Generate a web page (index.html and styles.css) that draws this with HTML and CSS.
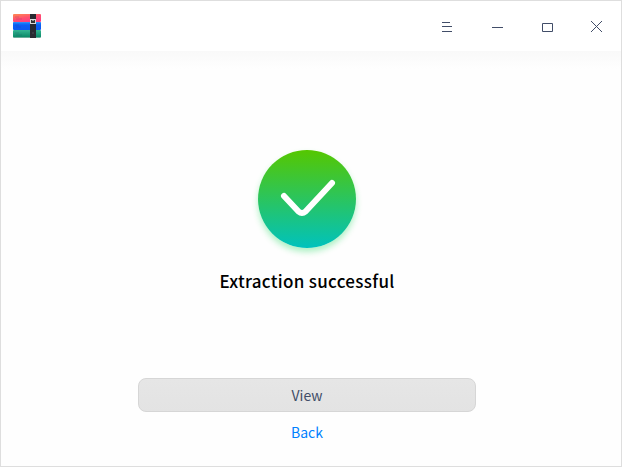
FILE: index.html
```
<!DOCTYPE html>
<html lang="en">
<head>
<meta charset="utf-8">
<title>Archive Manager</title>
<link rel="stylesheet" href="styles.css">
</head>
<body>
<div class="window">
  <header class="titlebar">
    <svg class="logo" width="30" height="26" viewBox="0 0 30 26">
      <defs>
        <linearGradient id="red" x2=".6" y2="1"><stop offset="0" stop-color="#ff8a50"/><stop offset=".55" stop-color="#ff4f70"/><stop offset="1" stop-color="#ff3c80"/></linearGradient>
        <linearGradient id="blue" x2="0" y2="1"><stop offset="0" stop-color="#1c8cff"/><stop offset=".4" stop-color="#0a5df5"/><stop offset="1" stop-color="#0a58f0"/></linearGradient>
        <linearGradient id="green" x2="0" y2="1"><stop offset="0" stop-color="#35b592"/><stop offset="1" stop-color="#078765"/></linearGradient>
      </defs>
      <rect x="1" y="24" width="28" height="1" rx=".5" fill="#c9cfcd"/>
      <rect x="1" y="1" width="28" height="8" rx="1" fill="url(#red)"/>
      <rect x="1" y="9" width="28" height="8" rx="1" fill="url(#blue)"/>
      <rect x="1" y="17" width="28" height="7.5" rx="1" fill="url(#green)"/>
      <path d="M1.5 9.5h27" stroke="#2a8ef5"/>
      <path d="M3 4h4m-3 2h6M3 12h4m-3 2h5M3 20h4m-3 2h6" stroke="#302060" stroke-opacity=".16"/>
      <rect x="18" y="1" width="6" height="24" fill="#292a31"/>
      <rect x="18.5" y="6.5" width="5" height="4" fill="#333" stroke="#d9d9d9"/>
      <path d="M20.5 6h1v2h-1z" fill="#eee"/>
      <path d="M20 20h2" stroke="#4c4d54"/>
    </svg>
    <nav class="controls">
      <svg width="14" height="14" viewBox="0 0 14 14"><path d="M2 2.5h8M2 6.5h10M2 11.5h10"/></svg>
      <svg width="14" height="14" viewBox="0 0 14 14"><path d="M2 7.5h11"/></svg>
      <svg width="14" height="14" viewBox="0 0 14 14"><path d="M2.5 3.5h10v8h-10z"/></svg>
      <svg width="14" height="14" viewBox="0 0 14 14"><path d="M1 1l11 11M12 1L1 12"/></svg>
    </nav>
  </header>
  <main class="content">
    <div class="badge">
      <svg width="98" height="98" viewBox="0 0 98 98"><path d="M26 46l14.5 15.5q3.5 3 7 0L74 33"/></svg>
    </div>
    <h1 class="title">Extraction successful</h1>
    <button class="view">View</button>
    <a class="back">Back</a>
  </main>
</div>
</body>
</html>
```

FILE: styles.css
```
* {
  box-sizing: border-box;
}

body {
  margin: 0;
  font-family: "Noto Sans CJK SC", "Noto Sans", sans-serif;
}

.window {
  display: flex;
  flex-direction: column;
  width: 622px;
  height: 467px;
  border: 1px solid #dedede;
  background: #fff;
}

.titlebar {
  display: flex;
  justify-content: space-between;
  height: 50px;
  padding: 12px 17px 0 11px;
}

.controls {
  display: flex;
  gap: 36px;
  padding-top: 7px;
}

.controls svg {
  display: block;
  fill: none;
  stroke: #414d68;
  stroke-width: 1;
}

.content {
  display: flex;
  flex: 1;
  flex-direction: column;
  align-items: center;
  padding: 99px 8px 0 0;
  background: linear-gradient(#f9f9f9, #fefefe 18px);
}

.badge {
  width: 98px;
  height: 98px;
  border-radius: 50%;
  background: linear-gradient(#55c700, #00c2bd);
  box-shadow: 0 4px 6px rgba(0, 213, 70, 0.32);
}

.badge svg {
  display: block;
  fill: none;
  stroke: #fff;
  stroke-width: 6;
  stroke-linecap: round;
  stroke-linejoin: round;
}

.title {
  margin: 20px 0 0;
  color: #000;
  font-size: 17px;
  font-weight: 500;
  letter-spacing: 0.3px;
  line-height: 25px;
}

.view {
  width: 338px;
  height: 34px;
  margin-top: 85px;
  padding: 0;
  border: 1px solid #d6d6d6;
  border-radius: 8px;
  background: linear-gradient(#e6e6e6, #e3e3e3);
  color: #414d68;
  font: 400 14px/32px "Noto Sans CJK SC", "Noto Sans", sans-serif;
}

.back {
  margin-top: 9px;
  color: #0081ff;
  font-size: 14px;
  line-height: 22px;
}
```
